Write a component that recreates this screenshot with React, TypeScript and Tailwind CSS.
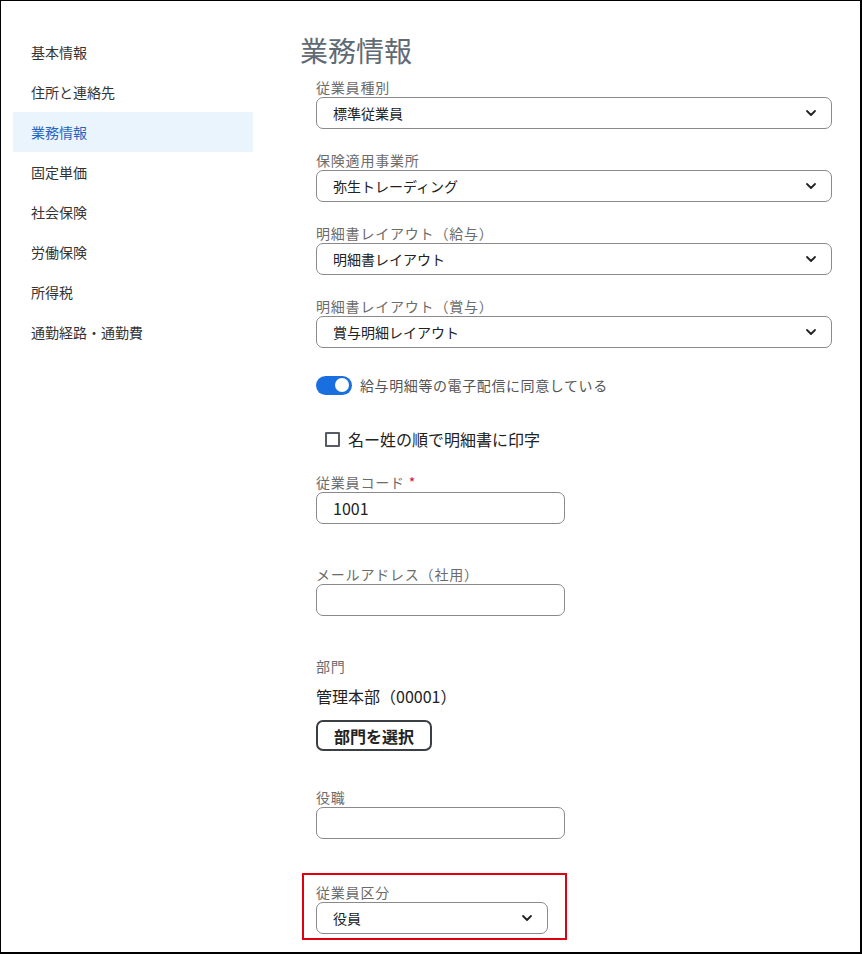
import React from "react";

const FONT = '"Noto Sans CJK JP", "Noto Sans", sans-serif';

const navItems = [
  "基本情報",
  "住所と連絡先",
  "業務情報",
  "固定単価",
  "社会保険",
  "労働保険",
  "所得税",
  "通勤経路・通勤費",
];

const Chevron = () => (
  <svg width="12" height="8" viewBox="0 0 12 8" className="shrink-0">
    <polyline
      points="2,2 6,6 10,2"
      fill="none"
      stroke="#222"
      strokeWidth="1.8"
      strokeLinecap="round"
      strokeLinejoin="round"
    />
  </svg>
);

const Label = ({ children }: { children: React.ReactNode }) => (
  <div className="h-[19px] text-[14px] leading-[19px] tracking-[0.8px] text-[#6b6b6b]">{children}</div>
);

const Select = ({ value, width = "w-[516px]" }: { value: string; width?: string }) => (
  <div
    className={`${width} h-[32px] rounded-[7px] border border-[#8a8a8a] flex items-center justify-between pl-[16px] pr-[14px] text-[14px] text-[#222]`}
  >
    <span>{value}</span>
    <Chevron />
  </div>
);

const Input = ({ value }: { value?: string }) => (
  <div className="w-[249px] h-[32px] rounded-[7px] border border-[#8a8a8a] flex items-center pl-[16px] text-[16px] text-[#222]">
    {value}
  </div>
);

export default function App() {
  return (
    <div
      className="w-[862px] h-[954px] bg-white border-l border-t border-r-2 border-b-2 border-black flex overflow-hidden"
      style={{ fontFamily: FONT }}
    >
      {/* sidebar */}
      <nav className="w-[299px] shrink-0 pt-[31px] pl-[12px]">
        {navItems.map((item, i) => (
          <div
            key={item}
            className={`w-[240px] h-[40px] flex items-center pl-[18px] text-[14px] ${
              i === 2 ? "bg-[#eaf4fd] text-[#2764c0]" : "text-[#333]"
            }`}
          >
            {item}
          </div>
        ))}
      </nav>

      {/* main */}
      <main className="flex flex-col pt-[30px]">
        <h1 className="h-[39px] text-[28px] leading-[39px] text-[#5f6a74]">業務情報</h1>

        <div className="pl-[16px] flex flex-col">
          <div className="mt-[8px]">
            <Label>従業員種別</Label>
            <Select value="標準従業員" />
          </div>
          <div className="mt-[22px]">
            <Label>保険適用事業所</Label>
            <Select value="弥生トレーディング" />
          </div>
          <div className="mt-[22px]">
            <Label>明細書レイアウト（給与）</Label>
            <Select value="明細書レイアウト" />
          </div>
          <div className="mt-[22px]">
            <Label>明細書レイアウト（賞与）</Label>
            <Select value="賞与明細レイアウト" />
          </div>

          <div className="mt-[27px] h-[20px] flex items-center gap-[8px]">
            <div className="w-[36px] h-[19px] rounded-full bg-[#1a6fe0] flex items-center justify-end pr-[3px]">
              <div className="w-[14px] h-[14px] rounded-full bg-white" />
            </div>
            <span className="text-[14px] tracking-[0.6px] text-[#555]">給与明細等の電子配信に同意している</span>
          </div>

          <div className="mt-[32px] h-[24px] flex items-center pl-[9px] gap-[8px]">
            <div className="w-[15px] h-[15px] border-2 border-[#555c66] rounded-[1px]" />
            <span className="text-[16px] text-[#222]">名ー姓の順で明細書に印字</span>
          </div>

          <div className="mt-[22px]">
            <Label>
              従業員コード <span className="text-[#d0103a]">*</span>
            </Label>
            <Input value="1001" />
          </div>

          <div className="mt-[41px]">
            <Label>メールアドレス（社用）</Label>
            <Input />
          </div>

          <div className="mt-[41px]">
            <Label>部門</Label>
            <div className="mt-[8px] h-[24px] text-[16px] leading-[24px] text-[#222]">管理本部（00001）</div>
            <button className="mt-[12px] w-[116px] h-[31px] rounded-[7px] border-2 border-[#3a3f45] text-[16px] font-bold text-[#222] flex items-center justify-center">
              部門を選択
            </button>
          </div>

          <div className="mt-[37px]">
            <Label>役職</Label>
            <Input />
          </div>
        </div>

        <div className="mt-[34px] ml-[2px] w-[265px] h-[67px] border-2 border-[#e00012] pl-[12px] pt-[8px]">
          <Label>従業員区分</Label>
          <Select value="役員" width="w-[232px]" />
        </div>
      </main>
    </div>
  );
}
